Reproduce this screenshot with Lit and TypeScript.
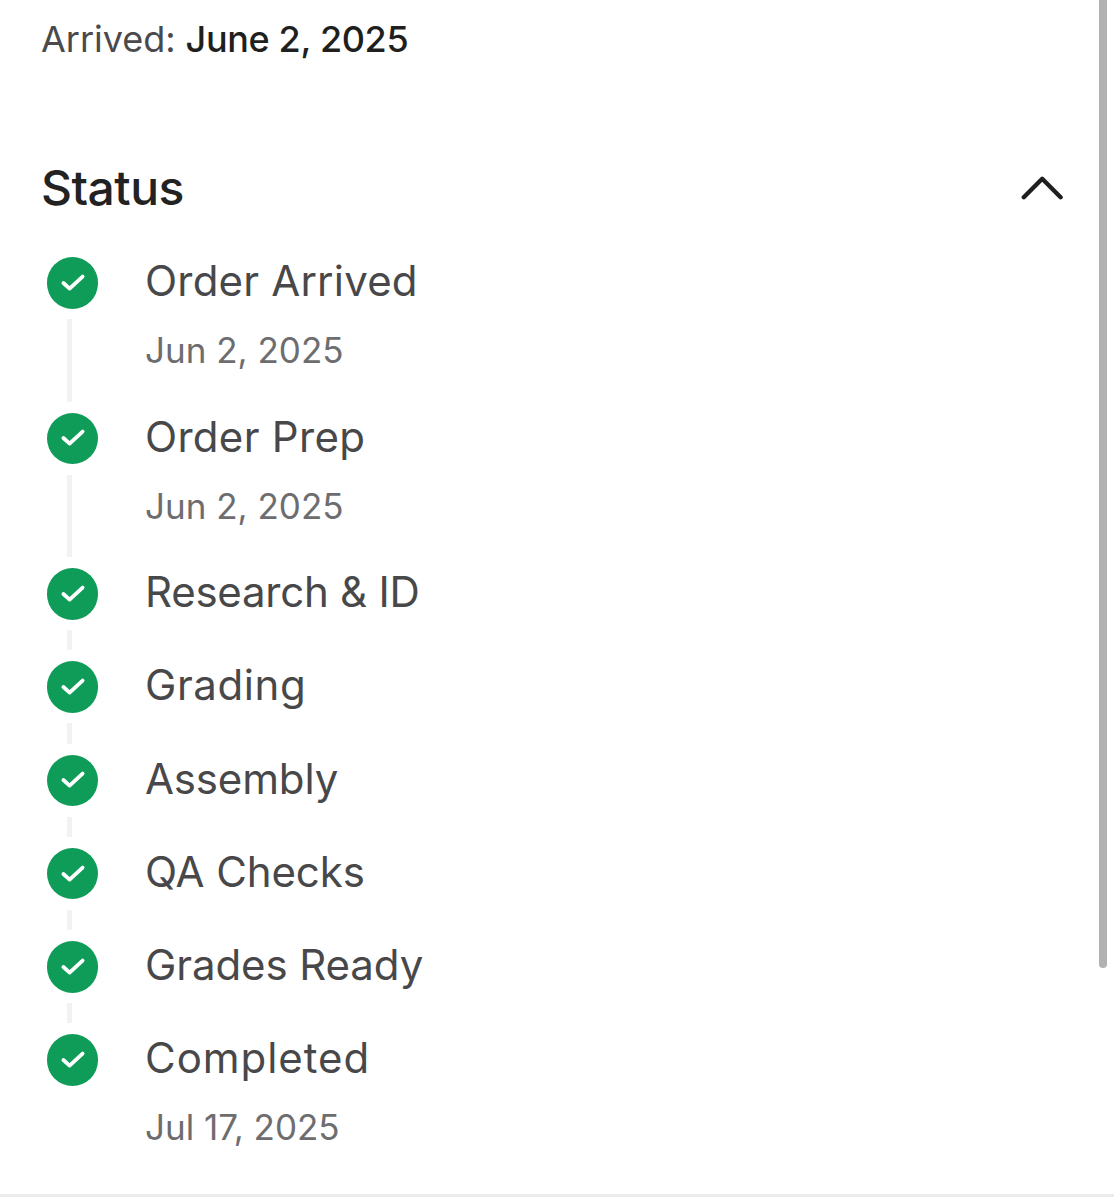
import { LitElement, html, css } from "lit";
import { customElement } from "lit/decorators.js";

const steps = [
  { name: "Order Arrived", date: "Jun 2, 2025", track: 0.2 },
  { name: "Order Prep", date: "Jun 2, 2025", track: 0.3 },
  { name: "Research & ID", track: -0.25 },
  { name: "Grading", track: 0.6 },
  { name: "Assembly", track: -0.15 },
  { name: "QA Checks", track: -0.1 },
  { name: "Grades Ready", track: -0.1 },
  { name: "Completed", date: "Jul 17, 2025", track: 0.95 },
];

@customElement("app-root")
export class AppRoot extends LitElement {
  static styles = css`
    :host { display: block; width: 1114px; height: 1200px; position: relative; overflow: hidden; background: #fff; font-family: Inter, "Noto Sans", sans-serif; }
    .page { height: 1200px; box-sizing: border-box; padding: 0 51px 0 41px; display: flex; flex-direction: column; }
    .arrived { margin: 14px 0 0; height: 50px; line-height: 50px; font-size: 36px; color: #4a4a4c; letter-spacing: -0.25px; }
    .arrived .lbl { letter-spacing: 0; }
    .arrived b { font-weight: 500; color: #1f1f20; letter-spacing: -0.35px; }
    .head { margin-top: 99px; height: 50px; display: flex; align-items: center; justify-content: space-between; }
    .head h2 { margin: 0; font-size: 48px; line-height: 50px; font-weight: 500; color: #222223; letter-spacing: -0.5px; }
    .chev { width: 44px; height: 24px; display: block; }
    .list { margin-top: 44px; display: flex; flex-direction: column; }
    .step { display: flex; height: 93.25px; }
    .step.tall { height: 155.5px; }
    .rail { width: 104px; flex: none; display: flex; flex-direction: column; }
    .dot { width: 51.5px; height: 51.5px; margin-left: 5.75px; border-radius: 50%; background: #0e9c58; flex: none; display: flex; align-items: center; justify-content: center; }
    .dot svg { width: 26px; height: 26px; display: block; }
    .line { width: 5px; margin: 10.5px 0 11px 26px; flex: 1; background: #f2f2f3; }
    .name { font-size: 42px; line-height: 48px; color: #48484a; }
    .date { margin-top: 20px; font-size: 35px; line-height: 50px; color: #6d6d70; letter-spacing: 0; }
    .foot { margin-top: auto; height: 3px; margin-left: -41px; margin-right: -51px; margin-bottom: 3px; background: #ececed; }
    .scroll { position: absolute; top: -20px; left: 1099px; width: 8px; height: 988px; border-radius: 4px; background: #b1b1b2; }
  `;

  render() {
    return html`
      <div class="page">
        <p class="arrived"><span class="lbl">Arrived:</span> <b>June 2, 2025</b></p>
        <div class="head">
          <h2>Status</h2>
          <svg class="chev" viewBox="0 0 44 24" fill="none"><path d="M4.8 21.2 L23.2 2.8 L41.6 21.2" stroke="#1f1f20" stroke-width="4.4" stroke-linecap="round" stroke-linejoin="round"/></svg>
        </div>
        <div class="list">
          ${steps.map((s, i) => html`
            <div class="step ${s.date ? "tall" : ""}">
              <div class="rail">
                <div class="dot"><svg viewBox="0 0 26 26" fill="none"><path d="M3.4 13 L9.6 18.6 L22.6 6.6" stroke="#fff" stroke-width="3.8" stroke-linecap="round" stroke-linejoin="round"/></svg></div>
                ${i < steps.length - 1 ? html`<div class="line"></div>` : ""}
              </div>
              <div>
                <div class="name" style="letter-spacing:${s.track}px">${s.name}</div>
                ${s.date ? html`<div class="date">${s.date}</div>` : ""}
              </div>
            </div>`)}
        </div>
        <div class="foot"></div>
      </div>
      <div class="scroll"></div>
    `;
  }
}
